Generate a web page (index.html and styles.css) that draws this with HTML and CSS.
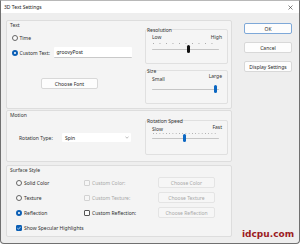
FILE: index.html
```html
<!DOCTYPE html>
<html lang="en">
<head>
    <meta charset="UTF-8">
    <title>3D Text Settings</title>
    <link rel="stylesheet" href="styles.css">
</head>
<body>

    <div class="window">
        <div class="titlebar">
            <span class="title">3D Text Settings</span>
            <svg class="close" width="5" height="5" viewBox="0 0 5 5"><path d="M0.5 0.5L4.5 4.5M4.5 0.5L0.5 4.5" stroke="#333" stroke-width="0.6"/></svg>
        </div>

        <div class="content">
            <div class="groups">

                <div class="group text-group">
                    <div class="group-title">Text</div>
                    <div class="group-body">
                        <div class="text-opts">
                            <div class="row time-row"><span class="radio"></span><span class="lbl">Time</span></div>
                            <div class="row custom-row">
                                <span class="radio on"></span><span class="lbl custom-lbl">Custom Text:</span>
                                <div class="field">groovyPost</div>
                            </div>
                            <div class="btn font-btn">Choose Font</div>
                        </div>
                        <div class="side">
                            <div class="sub res-box">
                                <div class="sub-title">Resolution</div>
                                <div class="scale res-scale"><span>Low</span><span>High</span></div>
                                <div class="rail res-rail">
                                    <div class="ticks"></div>
                                    <div class="track"></div>
                                    <span class="thumb hover" style="left: 55%"></span>
                                </div>
                            </div>
                            <div class="sub size-box">
                                <div class="sub-title">Size</div>
                                <div class="scale size-scale"><span class="low">Small</span><span>Large</span></div>
                                <div class="rail size-rail">
                                    <div class="track"></div>
                                    <span class="thumb" style="left: 95.5%"></span>
                                </div>
                            </div>
                        </div>
                    </div>
                </div>

                <div class="group motion-group">
                    <div class="group-title">Motion</div>
                    <div class="group-body">
                        <div class="motion-opts">
                            <div class="row type-row">
                                <span class="type-lbl">Rotation Type:</span>
                                <div class="select">
                                    <span>Spin</span>
                                    <svg width="4" height="3" viewBox="0 0 4 3"><path d="M0.5 0.8L2 2.2L3.5 0.8" fill="none" stroke="#777" stroke-width="0.5"/></svg>
                                </div>
                            </div>
                        </div>
                        <div class="side">
                            <div class="sub speed-box">
                                <div class="sub-title">Rotation Speed</div>
                                <div class="scale speed-scale"><span class="low">Slow</span><span>Fast</span></div>
                                <div class="rail speed-rail">
                                    <div class="ticks dense"></div>
                                    <div class="track"></div>
                                    <span class="thumb" style="left: 48%"></span>
                                </div>
                            </div>
                        </div>
                    </div>
                </div>

                <div class="group surface-group">
                    <div class="group-title">Surface Style</div>
                    <div class="surface-grid">
                        <div class="row"><span class="radio"></span><span class="lbl">Solid Color</span></div>
                        <div class="row off"><span class="check"></span><span class="lbl">Custom Color:</span></div>
                        <div class="btn off">Choose Color</div>

                        <div class="row"><span class="radio"></span><span class="lbl">Texture</span></div>
                        <div class="row off"><span class="check"></span><span class="lbl">Custom Texture:</span></div>
                        <div class="btn off">Choose Texture</div>

                        <div class="row"><span class="radio on"></span><span class="lbl">Reflection</span></div>
                        <div class="row"><span class="check"></span><span class="lbl">Custom Reflection:</span></div>
                        <div class="btn off">Choose Reflection</div>

                        <div class="row wide">
                            <span class="check on"><svg width="6" height="6" viewBox="0 0 6 6"><path d="M1.3 3.1L2.5 4.2L4.7 1.8" fill="none" stroke="#fff" stroke-width="0.7"/></svg></span>
                            <span class="lbl">Show Specular Highlights</span>
                        </div>
                    </div>
                </div>

            </div>

            <div class="buttons">
                <div class="btn default">OK</div>
                <div class="btn">Cancel</div>
                <div class="btn">Display Settings</div>
            </div>
        </div>
    </div>

    <div class="watermark">idcpu.com</div>

</body>
</html>
```

FILE: styles.css
```css
* {
    box-sizing: border-box;
}

body {
    margin: 0;
    background-color: #ffffff;
    font-family: "Noto Sans", "Open Sans", sans-serif;
    font-size: 5px;
    line-height: 6px;
    color: #2e2e2e;
}

.window {
    width: 300px;
    height: 244px;
    background-color: #eeeeee;
    border: 1px solid #707070;
    border-top-color: #b8b8b8;
    border-radius: 0 0 4px 4px;
    overflow: hidden;
}

.titlebar {
    height: 12px;
    background-color: #ffffff;
    display: flex;
    align-items: center;
    justify-content: space-between;
    padding: 0 6px 0 3px;
}

.title {
    color: #222;
}

.content {
    display: flex;
    padding-left: 5px;
}

.groups {
    width: 226px;
}

/* group panels */

.group {
    padding: 0 3px 0 2px;
    background-color: #f4f4f4;
    border: 1px solid #dddddd;
    border-radius: 2px;
}

.group-title {
    height: 6px;
    margin: 1px 0 -1px 1px;
    color: #333;
}

.group-body {
    display: flex;
}

.text-group {
    margin-top: 7px;
    height: 89px;
}

.motion-group {
    margin-top: 1px;
    height: 52px;
}

.surface-group {
    margin-top: 3px;
    height: 72px;
}

.text-opts,
.motion-opts {
    width: 136px;
}

.side {
    width: 83px;
}

.sub {
    border: 1px solid #e0e0e0;
    border-radius: 2px;
    background-color: #f5f5f5;
}

.sub-title {
    height: 5px;
    margin: -2px 0 0 1px;
    line-height: 5px;
    color: #333;
}

/* radios, checks, fields */

.row {
    display: flex;
    align-items: center;
}

.lbl {
    margin-left: 2px;
    white-space: nowrap;
}

.radio {
    width: 6px;
    height: 6px;
    border: 1px solid #666;
    border-radius: 50%;
    background-color: #fbfbfb;
    flex-shrink: 0;
}

.radio.on {
    border: 2px solid #0b5fb5;
    background-color: #ffffff;
}

.check {
    width: 6px;
    height: 6px;
    border: 1px solid #555;
    border-radius: 1px;
    background-color: #fbfbfb;
    flex-shrink: 0;
    display: flex;
}

.check.on {
    border-color: #0b5fb5;
    background-color: #0b5fb5;
}

.check.on svg {
    margin: -1px;
}

.row.off {
    color: #a8a8a8;
}

.row.off .check {
    border-color: #d2d2d2;
    background-color: #f6f6f6;
}

.time-row {
    height: 7px;
    margin-top: 7.5px;
    padding-left: 2.5px;
}

.custom-row {
    height: 11px;
    margin-top: 5.5px;
    padding-left: 2.5px;
}

.custom-lbl {
    width: 34px;
}

.field {
    width: 78px;
    height: 11px;
    background-color: #ffffff;
    border-bottom: 1px solid #c9c9c9;
    border-radius: 1px;
    padding: 2px 3px;
    color: #222;
}

.btn {
    height: 11px;
    display: flex;
    align-items: center;
    justify-content: center;
    background-color: #fdfdfd;
    border: 1px solid #d8d8d8;
    border-radius: 2px;
    white-space: nowrap;
    color: #2a2a2a;
}

.btn.off {
    background-color: #f6f6f6;
    border-color: #e4e4e4;
    color: #a8a8a8;
}

.font-btn {
    width: 57px;
    margin: 20px 0 0 32px;
}

/* sliders */

.res-box {
    height: 35px;
    margin-top: 2px;
}

.size-box {
    height: 34px;
    margin-top: 6px;
}

.speed-box {
    height: 35px;
    margin-top: 3px;
}

.scale {
    display: flex;
    justify-content: space-between;
    align-items: flex-start;
    padding: 0 5px 0 6px;
    color: #333;
}

.res-scale {
    margin-top: 1px;
}

.size-scale {
    height: 9px;
    margin-top: -1px;
}

.speed-scale {
    height: 8px;
}

.size-scale .low {
    margin-top: 3px;
}

.speed-scale .low {
    margin-top: 2px;
}

.rail {
    position: relative;
    height: 12px;
    margin: 0 8px 0 6px;
}

.res-rail {
    margin-top: 3px;
}

.size-rail {
    margin-top: 1px;
}

.ticks {
    position: absolute;
    left: 1px;
    right: 1px;
    top: 0;
    height: 1px;
    background-image: linear-gradient(to right, #a9a9a9 0.6px, transparent 0.6px);
    background-size: 6.5px 1px;
}

.ticks.dense {
    top: 1px;
    background-size: 3.25px 1px;
}

.track {
    position: absolute;
    left: 0;
    right: 0;
    top: 5.5px;
    height: 1.2px;
    border-radius: 1px;
    background-color: #c6c6c6;
}

.thumb {
    position: absolute;
    top: 2px;
    width: 3px;
    height: 8px;
    margin-left: -1.5px;
    border-radius: 1.5px;
    background-color: #0b67c2;
}

.thumb.hover {
    background-color: #111;
}

/* motion */

.type-row {
    margin-top: 16px;
    height: 9px;
}

.type-lbl {
    width: 43px;
    margin-left: 10px;
    color: #333;
}

.select {
    width: 69px;
    height: 9px;
    display: flex;
    align-items: center;
    justify-content: space-between;
    padding: 0 2px 0 3px;
    background-color: #ffffff;
    border-radius: 1px;
    color: #222;
}

/* surface */

.surface-grid {
    display: grid;
    grid-template-columns: 68px 74px 57px;
    grid-auto-rows: 11px;
    row-gap: 4px;
    padding: 5px 0 0 7px;
}

.surface-grid .wide {
    grid-column: 1 / 4;
}

/* dialog buttons */

.buttons {
    width: 48px;
    margin: 10px 0 0 12px;
    display: flex;
    flex-direction: column;
    gap: 8px;
}

.btn.default {
    border-color: #7ea8d8;
}

.watermark {
    position: absolute;
    left: 242px;
    top: 229px;
    font-family: "DejaVu Sans", sans-serif;
    font-weight: bold;
    font-size: 9px;
    line-height: 10px;
    color: #9c1c1f;
}
```
